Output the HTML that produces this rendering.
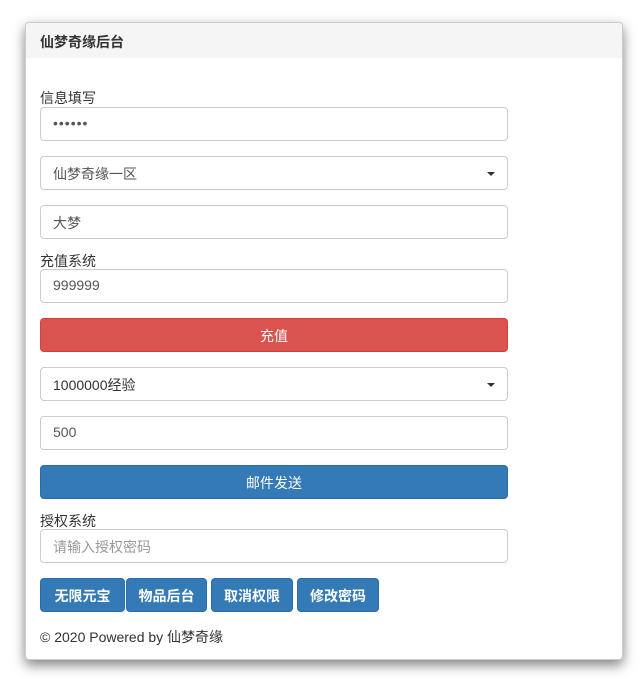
<!DOCTYPE html>
<html><head><meta charset="utf-8"><style>
*{box-sizing:border-box;margin:0;padding:0}
body{width:643px;height:679px;background:#fff;font-family:"Liberation Sans","Noto Sans CJK SC",sans-serif;font-size:14px;color:#333;position:relative;overflow:hidden}
.panel{position:absolute;left:25px;top:22px;width:598px;height:638px;background:#fff;border:1px solid #ccc;border-radius:4px;box-shadow:0 5px 12px rgba(0,0,0,.5)}
.hd{position:absolute;left:0;top:0;width:100%;height:35px;background:#f5f5f5;border-radius:4px 4px 0 0;font-weight:bold;font-size:14px;padding:9px 14px;color:#333}
.el{position:absolute;left:40px;width:468px;height:34px}
.in{border:1px solid #ccc;border-radius:4px;padding:7px 12px;color:#555;background:#fff}
.lb{position:absolute;left:40px;font-size:14px;color:#333;z-index:2;line-height:15px}
.caret{position:absolute;right:12px;top:15px;border-left:4px solid transparent;border-right:4px solid transparent;border-top:4px solid #333}
.btn{border-radius:4px;color:#fff;text-align:center;padding:7px 0;font-size:14px}
.red{background:#d9534f;border:1px solid #d43f3a}
.blue{background:#337ab7;border:1px solid #2e6da4}
.sb{position:absolute;top:578px;height:34px;background:#337ab7;border:1px solid #2e6da4;border-radius:4px;color:#fff;font-weight:bold;text-align:center;padding:7px 0;font-size:14px}
</style></head><body>
<div class="panel"><div class="hd">仙梦奇缘后台</div></div>
<div class="el in" style="top:107px;letter-spacing:1px">••••••</div>
<div class="lb" style="top:91px">信息填写</div>
<div class="el in" style="top:156px">仙梦奇缘一区<span class="caret"></span></div>
<div class="el in" style="top:205px">大梦</div>
<div class="el in" style="top:269px">999999</div>
<div class="lb" style="top:254px">充值系统</div>
<div class="el btn red" style="top:318px">充值</div>
<div class="el in" style="top:367px;color:#333">1000000经验<span class="caret"></span></div>
<div class="el in" style="top:416px">500</div>
<div class="el btn blue" style="top:465px">邮件发送</div>
<div class="el in" style="top:529px;color:#999">请输入授权密码</div>
<div class="lb" style="top:514px">授权系统</div>
<div class="sb" style="left:40px;width:85px">无限元宝</div>
<div class="sb" style="left:126px;width:81px">物品后台</div>
<div class="sb" style="left:211px;width:82px">取消权限</div>
<div class="sb" style="left:297px;width:82px">修改密码</div>
<div class="lb" style="top:630px">© 2020 Powered by 仙梦奇缘</div>
</body></html>
